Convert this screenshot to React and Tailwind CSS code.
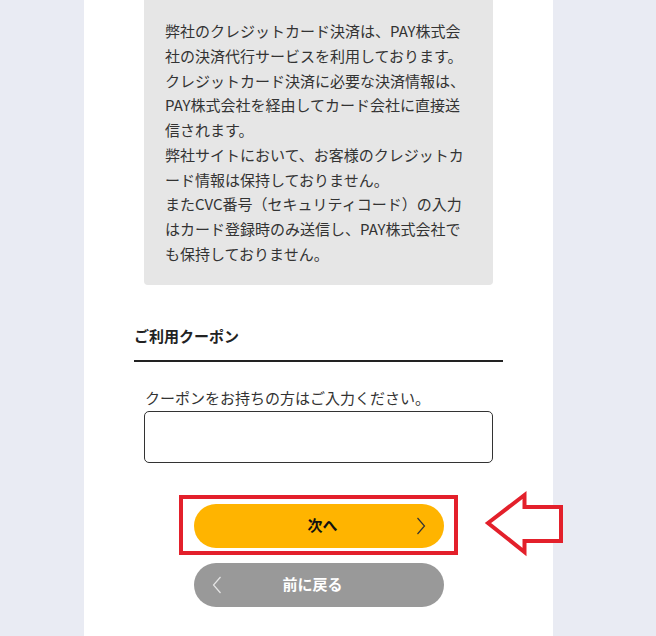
const jp = { fontFamily: '"Noto Sans CJK JP", "Noto Sans", sans-serif' };

const notes = [
  "弊社のクレジットカード決済は、PAY株式会社の決済代行サービスを利用しております。",
  "クレジットカード決済に必要な決済情報は、PAY株式会社を経由してカード会社に直接送信されます。",
  "弊社サイトにおいて、お客様のクレジットカード情報は保持しておりません。",
  "またCVC番号（セキュリティコード）の入力はカード登録時のみ送信し、PAY株式会社でも保持しておりません。",
];

const Chevron = ({ dir = "right", color }) => (
  <svg width="10" height="18" viewBox="0 0 10 18" fill="none">
    <path
      d={dir === "right" ? "M1.5 1 L8.5 9 L1.5 17" : "M8.5 1 L1.5 9 L8.5 17"}
      stroke={color}
      strokeWidth="1.2"
    />
  </svg>
);

export default function App() {
  return (
    <div className="relative min-h-[636px] bg-[#e9ebf3] overflow-hidden" style={jp}>
      <div className="ml-[84px] w-[469px] min-h-[636px] bg-white px-[50px]">
        <div className="mx-[10px] rounded-b bg-[#e6e6e6] pl-[21px] pr-[18px] pt-[19px] pb-[18px] text-[15px] leading-[24.75px] text-[#333]">
          {notes.map((n, i) => (
            <p key={i}>{n}</p>
          ))}
        </div>

        <h2 className="mt-[39px] border-b-2 border-[#222] pb-[12px] text-[15px] font-bold leading-[24px] text-[#222]">
          ご利用クーポン
        </h2>

        <div className="mx-[10px] mt-[24px]">
          <p className="pl-px text-[15px] leading-[24px] text-[#333]">
            クーポンをお持ちの方はご入力ください。
          </p>
          <input
            type="text"
            className="mt-px block h-[52px] w-full rounded-[5px] border border-[#333] bg-white px-3 text-[15px] outline-none"
          />
        </div>

        <div className="mt-[41px] flex flex-col items-center gap-[15px]">
          <div className="relative">
            <button className="relative flex h-[44px] w-[250px] items-center justify-center rounded-full bg-[#ffb400] pl-2 text-[15px] font-bold text-[#111]">
              次へ
              <span className="absolute right-[18px] top-[13px]">
                <Chevron dir="right" color="#333" />
              </span>
            </button>
            <div className="pointer-events-none absolute -left-[15px] -top-[9px] h-[60px] w-[279px] border-4 border-[#e3202b]" />
          </div>
          <button className="relative flex h-[44px] w-[250px] items-center justify-center rounded-full bg-[#999999] pr-3 text-[15px] font-bold text-white">
            前に戻る
            <span className="absolute left-[18px] top-[13px]">
              <Chevron dir="left" color="#e5e5e5" />
            </span>
          </button>
        </div>
      </div>

      <svg
        className="absolute left-[480px] top-[488px]"
        width="90"
        height="72"
        viewBox="0 0 90 72"
        fill="none"
      >
        <polygon
          points="8,35 44.5,7 44.5,19 81,19 81,53 44.5,53 44.5,64"
          stroke="#e3202b"
          strokeWidth="4"
          strokeLinejoin="miter"
          fill="white"
        />
      </svg>
    </div>
  );
}
